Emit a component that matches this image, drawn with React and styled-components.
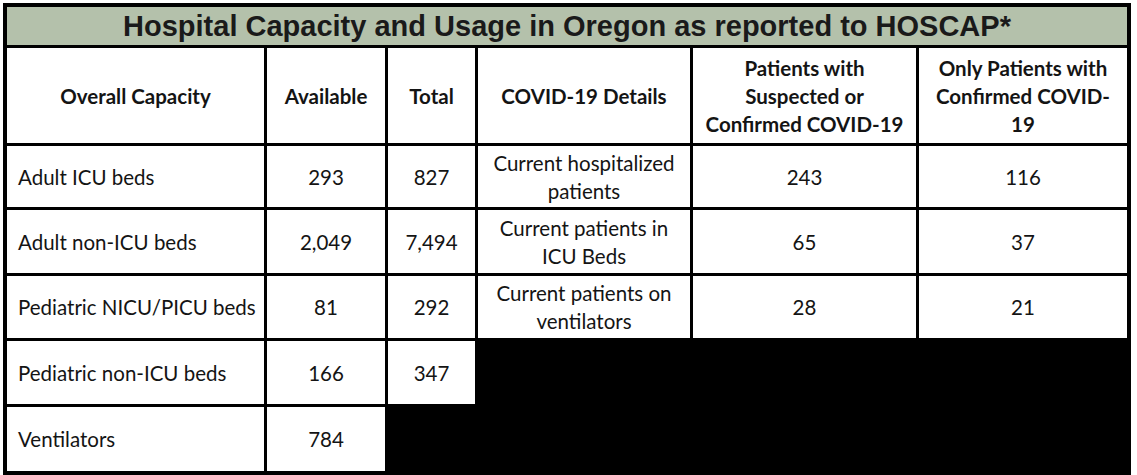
import React from 'react';
import styled, { createGlobalStyle } from 'styled-components';

const GlobalStyle = createGlobalStyle`
  html, body {
    margin: 0;
    padding: 0;
    background: #ffffff;
  }
`;

const capacityRows = [
  { label: 'Adult ICU beds', available: '293', total: '827' },
  { label: 'Adult non-ICU beds', available: '2,049', total: '7,494' },
  { label: 'Pediatric NICU/PICU beds', available: '81', total: '292' },
  { label: 'Pediatric non-ICU beds', available: '166', total: '347' },
  { label: 'Ventilators', available: '784' },
];

const covidRows = [
  { detail: ['Current hospitalized', 'patients'], suspected: '243', confirmed: '116' },
  { detail: ['Current patients in', 'ICU Beds'], suspected: '65', confirmed: '37' },
  { detail: ['Current patients on', 'ventilators'], suspected: '28', confirmed: '21' },
];

export default function App() {
  return (
    <Page>
      <GlobalStyle />
      <Sheet>
        <TitleBar>Hospital Capacity and Usage in Oregon as reported to HOSCAP*</TitleBar>

        <HeadCell>Overall Capacity</HeadCell>
        <HeadCell>Available</HeadCell>
        <HeadCell>Total</HeadCell>
        <HeadCell>COVID-19 Details</HeadCell>
        <HeadCell>
          Patients with
          <br />
          Suspected or
          <br />
          Confirmed COVID-19
        </HeadCell>
        <HeadCell>
          Only Patients with
          <br />
          Confirmed COVID-
          <br />
          19
        </HeadCell>

        {capacityRows.map((row, i) => {
          const covid = covidRows[i];
          return (
            <React.Fragment key={row.label}>
              <LabelCell>{row.label}</LabelCell>
              <ValueCell>{row.available}</ValueCell>
              {row.total && <ValueCell>{row.total}</ValueCell>}
              {covid && (
                <>
                  <ValueCell>
                    {covid.detail[0]}
                    <br />
                    {covid.detail[1]}
                  </ValueCell>
                  <ValueCell>{covid.suspected}</ValueCell>
                  <ValueCell>{covid.confirmed}</ValueCell>
                </>
              )}
            </React.Fragment>
          );
        })}
      </Sheet>
    </Page>
  );
}

const Page = styled.div`
  padding: 3px 0 0 3px;
`;

const Sheet = styled.div`
  display: grid;
  grid-template-columns: 257px 118px 87px 212px 223px 208px;
  grid-template-rows: 38px 95px 61px 63px 62px 63px 64px;
  gap: 3px;
  padding: 4px;
  width: max-content;
  background: #000000;
  font-family: Lato, 'Open Sans', sans-serif;
  color: #141414;
`;

const TitleBar = styled.div`
  grid-column: 1 / -1;
  display: flex;
  align-items: center;
  justify-content: center;
  background: #b4c1ab;
  font-family: 'Liberation Sans', Arial, sans-serif;
  font-weight: 700;
  font-size: 29px;
  color: #1a1a1a;
  white-space: nowrap;
`;

const Cell = styled.div`
  display: flex;
  align-items: center;
  background: #ffffff;
  font-size: 20.5px;
  line-height: 28px;
  white-space: nowrap;
`;

const HeadCell = styled(Cell)`
  justify-content: center;
  text-align: center;
  font-weight: 700;
`;

const LabelCell = styled(Cell)`
  grid-column: 1;
  padding-left: 11px;
`;

const ValueCell = styled(Cell)`
  justify-content: center;
  text-align: center;
`;
